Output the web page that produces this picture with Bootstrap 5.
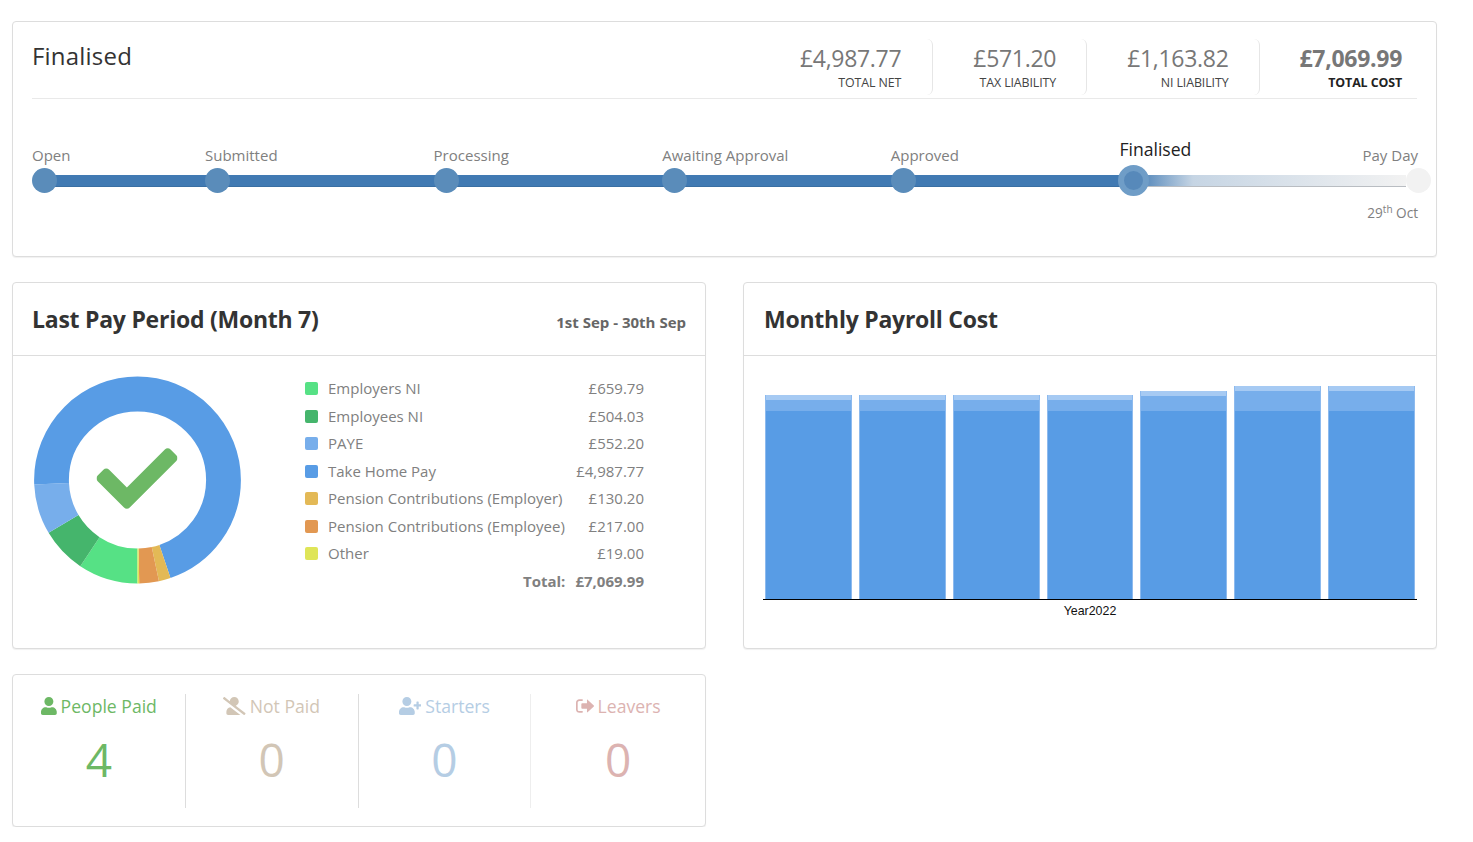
<!DOCTYPE html>
<html lang="en"><head><meta charset="utf-8"><title>Payroll</title>
<link rel="stylesheet" href="https://cdn.jsdelivr.net/npm/bootstrap@5.3.0/dist/css/bootstrap.min.css">
<style>
body{font-family:"Open Sans","Noto Sans",sans-serif;background:#fff;color:#777;font-size:15px}
.shell{width:1425px;margin:21px 0 0 12px;display:flex;flex-direction:column;gap:25px}
.panel{border:1px solid #ddd;border-radius:4px;box-shadow:0 1px 1px rgba(0,0,0,.06)}
.panel-top{height:236px;padding:17px 19px 0}
.top-head{height:60px;border-bottom:1px solid #e9e9e9}
.page-state{font-size:24px;color:#333;line-height:36px;letter-spacing:.2px;margin-top:-1px}
.stat{height:56px;padding:0 30px 0 40px;text-align:right;border-right:1px solid #e6e6e6;border-radius:6px}
.stat:first-child{padding-right:31px}
.stat:last-child{border-right:0;padding-right:15px}
.stat-val{font-size:23px;line-height:38px;color:#777;letter-spacing:-.3px}
.stat-lab{font-size:12.4px;line-height:10px;color:#444;margin-top:1px;letter-spacing:-.1px}
.stat-strong .stat-val{font-weight:700}.stat-strong .stat-lab{font-weight:700;color:#222}
.stepper{position:relative;display:flex;margin-top:46px;height:70px}
.stepper::before{content:"";position:absolute;left:12px;top:30px;width:1090px;height:12px;background:#417ab3;border-bottom:1px solid #3a6fa3}
.stepper::after{content:"";position:absolute;left:1101px;top:30px;width:273px;height:12px;background:linear-gradient(90deg,#417ab3 0,#c6d5e4 22%,#f2f2f2 100%);border-bottom:1px solid #b9bdc2}
.step{position:relative;z-index:1;width:228.6px;flex:none}
.step-first{width:173px}
.step-lab{font-size:15px;line-height:20px;height:23px;color:#808080}
.step-dot{display:block;width:25px;height:25px;border-radius:50%;background:#5a8cba}
.step-now .step-lab{font-size:17.6px;line-height:24px;color:#222;margin-top:-8px;height:28px}
.step-now .step-dot{width:31px;height:31px;margin-left:-1px;background:#5789ba;border:6px solid #6f9dc7}
.step-end{margin-left:auto;width:auto;text-align:right;margin-right:-1px}
.step-end .step-dot{background:#f2f2f2;margin:0 -13px 0 auto}
.pay-date{font-size:13.6px;color:#808080;line-height:20px;margin-top:10px}
.pay-date sup{font-size:10px}
.chart-pair{display:grid;grid-template-columns:694px 694px;gap:37px}
.panel-mid{height:367px}
.mid-head{height:73px;padding:0 19px 0 19px;border-bottom:1px solid #ddd}
.mid-head-alt{padding-left:20px}
.mid-title{font-size:23px;font-weight:700;color:#333;margin:0;line-height:68px;letter-spacing:-.25px}
.mid-range{font-size:15px;font-weight:700;color:#666;padding-top:6px}
.mid-body{padding:20px 61px 0 21px}
.donut{width:207px;height:208px;flex:none;display:block}
.legend{width:339px;margin-top:-1px}
.leg-row{height:27.5px;line-height:25px;color:#808080;font-size:15px}
.leg-chip{width:13px;height:13px;border-radius:2px;margin-right:10px;flex:none}
.leg-sum{font-weight:700;justify-content:flex-end;gap:10px}
.plot{padding:30px 19px 0}
.plot-area{height:214px;border-bottom:1px solid #000;padding:0 2px;display:flex;align-items:flex-end;gap:7px}
.plot-bar{flex:1 1 0;display:flex;flex-direction:column;border:solid #8dbaee;border-width:0 1px}
.seg-top{background:#a6caf3}.seg-mid{background:#77aeeb}.seg-low{background:#589ce5}
.ht-low{height:188px}.ht-5{height:5px}.ht-4{height:4.5px}.ht-11{height:11px}.ht-15{height:15.5px}.ht-20{height:20.5px}
.plot-cap{font-family:"Liberation Sans",Arial,sans-serif;font-size:12.4px;color:#111;text-align:center;line-height:22px}
.panel-low{width:694px;height:153px;padding:19px 0 0;display:flex}
.tally{width:173px;height:114px;text-align:center;border-right:1px solid #ddd}
.tally:last-child{border-right:0;width:174px}
.tally:nth-child(3){border-right-color:#eee}
.tally-lab{font-size:17.6px;line-height:24px;display:flex;align-items:center;justify-content:center;gap:4px}
.tally-lab svg{height:18px;fill:currentColor;flex:none}
.tally-num{font-size:46px;line-height:60px;margin-top:11px;font-weight:400}
.c-green{color:#6db865}.c-tan{color:#d2c6b6}.c-blue{color:#b5cde4}.c-pink{color:#dcb3b1}
</style></head><body>
<div class="shell">
 <section class="panel panel-top bg-white">
  <div class="top-head d-flex justify-content-between align-items-start">
   <div class="page-state">Finalised</div>
   <div class="d-flex" >
    <div class="stat"><div class="stat-val">£4,987.77</div><div class="stat-lab">TOTAL NET</div></div>
    <div class="stat"><div class="stat-val">£571.20</div><div class="stat-lab">TAX LIABILITY</div></div>
    <div class="stat"><div class="stat-val">£1,163.82</div><div class="stat-lab">NI LIABILITY</div></div>
    <div class="stat stat-strong"><div class="stat-val">£7,069.99</div><div class="stat-lab">TOTAL COST</div></div>
   </div>
  </div>
  <div class="stepper">
   <div class="step step-first"><div class="step-lab">Open</div><span class="step-dot"></span></div>
   <div class="step"><div class="step-lab">Submitted</div><span class="step-dot"></span></div>
   <div class="step"><div class="step-lab">Processing</div><span class="step-dot"></span></div>
   <div class="step"><div class="step-lab">Awaiting Approval</div><span class="step-dot"></span></div>
   <div class="step"><div class="step-lab">Approved</div><span class="step-dot"></span></div>
   <div class="step step-now"><div class="step-lab">Finalised</div><span class="step-dot"></span></div>
   <div class="step step-end"><div class="step-lab">Pay Day</div><span class="step-dot"></span><div class="pay-date">29<sup>th</sup> Oct</div></div>
  </div>
 </section>

 <div class="chart-pair">
  <section class="panel panel-mid bg-white">
   <div class="mid-head d-flex justify-content-between align-items-center">
    <h2 class="mid-title">Last Pay Period (Month 7)</h2><div class="mid-range">1st Sep - 30th Sep</div>
   </div>
   <div class="mid-body d-flex justify-content-between">
    <svg class="donut" viewBox="0 0 207 208" aria-hidden="true">
     <g fill="none" stroke-width="34.8" transform="rotate(90 103.5 104)">
      <circle cx="103.5" cy="104" r="86" pathLength="7069.99" stroke="#56e185" stroke-dasharray="659.79 7069.99" stroke-dashoffset="0"/>
      <circle cx="103.5" cy="104" r="86" pathLength="7069.99" stroke="#45b56c" stroke-dasharray="504.03 7069.99" stroke-dashoffset="-659.79"/>
      <circle cx="103.5" cy="104" r="86" pathLength="7069.99" stroke="#77aeeb" stroke-dasharray="552.2 7069.99" stroke-dashoffset="-1163.82"/>
      <circle cx="103.5" cy="104" r="86" pathLength="7069.99" stroke="#589ce5" stroke-dasharray="4987.77 7069.99" stroke-dashoffset="-1716.02"/>
      <circle cx="103.5" cy="104" r="86" pathLength="7069.99" stroke="#e3b956" stroke-dasharray="130.2 7069.99" stroke-dashoffset="-6703.79"/>
      <circle cx="103.5" cy="104" r="86" pathLength="7069.99" stroke="#e29852" stroke-dasharray="217 7069.99" stroke-dashoffset="-6833.99"/>
      <circle cx="103.5" cy="104" r="86" pathLength="7069.99" stroke="#dfe558" stroke-dasharray="19 7069.99" stroke-dashoffset="-7050.99"/>
     </g>
     <svg x="62.5" y="62" width="81" height="81" viewBox="0 0 512 512"><path fill="#6db865" d="M173.898 439.404l-166.4-166.4c-9.997-9.997-9.997-26.206 0-36.204l36.203-36.204c9.997-9.998 26.207-9.998 36.204 0L192 312.69 432.095 72.596c9.997-9.997 26.207-9.997 36.204 0l36.203 36.204c9.997 9.997 9.997 26.206 0 36.204l-294.4 294.401c-9.998 9.997-26.207 9.997-36.204-.001z"/></svg>
    </svg>
    <div class="legend">
     <div class="leg-row d-flex align-items-center"><span class="leg-chip" style="background:#56e185"></span><span>Employers NI</span><span class="ms-auto">£659.79</span></div>
     <div class="leg-row d-flex align-items-center"><span class="leg-chip" style="background:#45b56c"></span><span>Employees NI</span><span class="ms-auto">£504.03</span></div>
     <div class="leg-row d-flex align-items-center"><span class="leg-chip" style="background:#77aeeb"></span><span>PAYE</span><span class="ms-auto">£552.20</span></div>
     <div class="leg-row d-flex align-items-center"><span class="leg-chip" style="background:#589ce5"></span><span>Take Home Pay</span><span class="ms-auto">£4,987.77</span></div>
     <div class="leg-row d-flex align-items-center"><span class="leg-chip" style="background:#e3b956"></span><span>Pension Contributions (Employer)</span><span class="ms-auto">£130.20</span></div>
     <div class="leg-row d-flex align-items-center"><span class="leg-chip" style="background:#e29852"></span><span>Pension Contributions (Employee)</span><span class="ms-auto">£217.00</span></div>
     <div class="leg-row d-flex align-items-center"><span class="leg-chip" style="background:#dfe558"></span><span>Other</span><span class="ms-auto">£19.00</span></div>
     <div class="leg-row d-flex align-items-center leg-sum"><span>Total:</span><span>£7,069.99</span></div>
    </div>
   </div>
  </section>
  <section class="panel panel-mid bg-white">
   <div class="mid-head mid-head-alt d-flex align-items-center"><h2 class="mid-title">Monthly Payroll Cost</h2></div>
   <div class="plot">
    <div class="plot-area">
     <div class="plot-bar"><div class="seg-top ht-5"></div><div class="seg-mid ht-11"></div><div class="seg-low ht-low"></div></div>
     <div class="plot-bar"><div class="seg-top ht-5"></div><div class="seg-mid ht-11"></div><div class="seg-low ht-low"></div></div>
     <div class="plot-bar"><div class="seg-top ht-5"></div><div class="seg-mid ht-11"></div><div class="seg-low ht-low"></div></div>
     <div class="plot-bar"><div class="seg-top ht-5"></div><div class="seg-mid ht-11"></div><div class="seg-low ht-low"></div></div>
     <div class="plot-bar"><div class="seg-top ht-4"></div><div class="seg-mid ht-15"></div><div class="seg-low ht-low"></div></div>
     <div class="plot-bar"><div class="seg-top ht-5"></div><div class="seg-mid ht-20"></div><div class="seg-low ht-low"></div></div>
     <div class="plot-bar"><div class="seg-top ht-5"></div><div class="seg-mid ht-20"></div><div class="seg-low ht-low"></div></div>
    </div>
    <div class="plot-cap">Year2022</div>
   </div>
  </section>
 </div>

 <section class="panel panel-low bg-white">
  <div class="tally c-green"><div class="tally-lab"><svg viewBox="0 0 448 512"><path d="M224 256c70.7 0 128-57.3 128-128S294.7 0 224 0 96 57.3 96 128s57.3 128 128 128zm89.6 32h-16.7c-22.2 10.2-46.9 16-72.9 16s-50.6-5.8-72.9-16h-16.7C60.2 288 0 348.2 0 422.4V464c0 26.5 21.5 48 48 48h352c26.5 0 48-21.5 48-48v-41.6c0-74.2-60.2-134.4-134.4-134.4z"/></svg><span>People Paid</span></div><div class="tally-num">4</div></div>
  <div class="tally c-tan"><div class="tally-lab"><svg viewBox="0 0 640 512"><path d="M633.8 458.1L362.3 248.3C412.1 230.7 448 183.8 448 128 448 57.3 390.7 0 320 0c-67.1 0-121.5 51.8-126.9 117.4L45.5 3.4C38.5-2 28.5-.8 23 6.2L3.4 31.4c-5.4 7-4.2 17 2.8 22.4l588.4 454.7c7 5.4 17 4.2 22.5-2.8l19.6-25.3c5.4-6.8 4.1-16.9-2.9-22.3zM96 422.4V464c0 26.5 21.5 48 48 48h350.2L207.4 290.3C144.2 301.3 96 356 96 422.4z"/></svg><span>Not Paid</span></div><div class="tally-num">0</div></div>
  <div class="tally c-blue"><div class="tally-lab"><svg viewBox="0 0 640 512"><path d="M624 208h-64v-64c0-8.8-7.2-16-16-16h-32c-8.8 0-16 7.2-16 16v64h-64c-8.8 0-16 7.2-16 16v32c0 8.8 7.2 16 16 16h64v64c0 8.8 7.2 16 16 16h32c8.8 0 16-7.2 16-16v-64h64c8.8 0 16-7.2 16-16v-32c0-8.8-7.2-16-16-16zm-400 48c70.7 0 128-57.3 128-128S294.7 0 224 0 96 57.3 96 128s57.3 128 128 128zm89.6 32h-16.7c-22.2 10.2-46.9 16-72.9 16s-50.6-5.8-72.9-16h-16.7C60.2 288 0 348.2 0 422.4V464c0 26.5 21.5 48 48 48h352c26.5 0 48-21.5 48-48v-41.6c0-74.2-60.2-134.4-134.4-134.4z"/></svg><span>Starters</span></div><div class="tally-num">0</div></div>
  <div class="tally c-pink"><div class="tally-lab"><svg viewBox="0 0 512 512"><path d="M180 448H96c-53 0-96-43-96-96V160c0-53 43-96 96-96h84c6.6 0 12 5.4 12 12v24c0 6.6-5.4 12-12 12H96c-26.5 0-48 21.5-48 48v192c0 26.5 21.5 48 48 48h84c6.6 0 12 5.4 12 12v24c0 6.6-5.4 12-12 12z"/><path d="M312 84c0-9 10-13 17-7l178 167c7 7 7 17 0 24L329 435c-7 6-17 2-17-7v-92H176c-13 0-24-11-24-24V200c0-13 11-24 24-24h136z"/></svg><span>Leavers</span></div><div class="tally-num">0</div></div>
 </section>
</div>
<script src="https://cdn.jsdelivr.net/npm/bootstrap@5.3.0/dist/js/bootstrap.bundle.min.js"></script>
</body></html>
